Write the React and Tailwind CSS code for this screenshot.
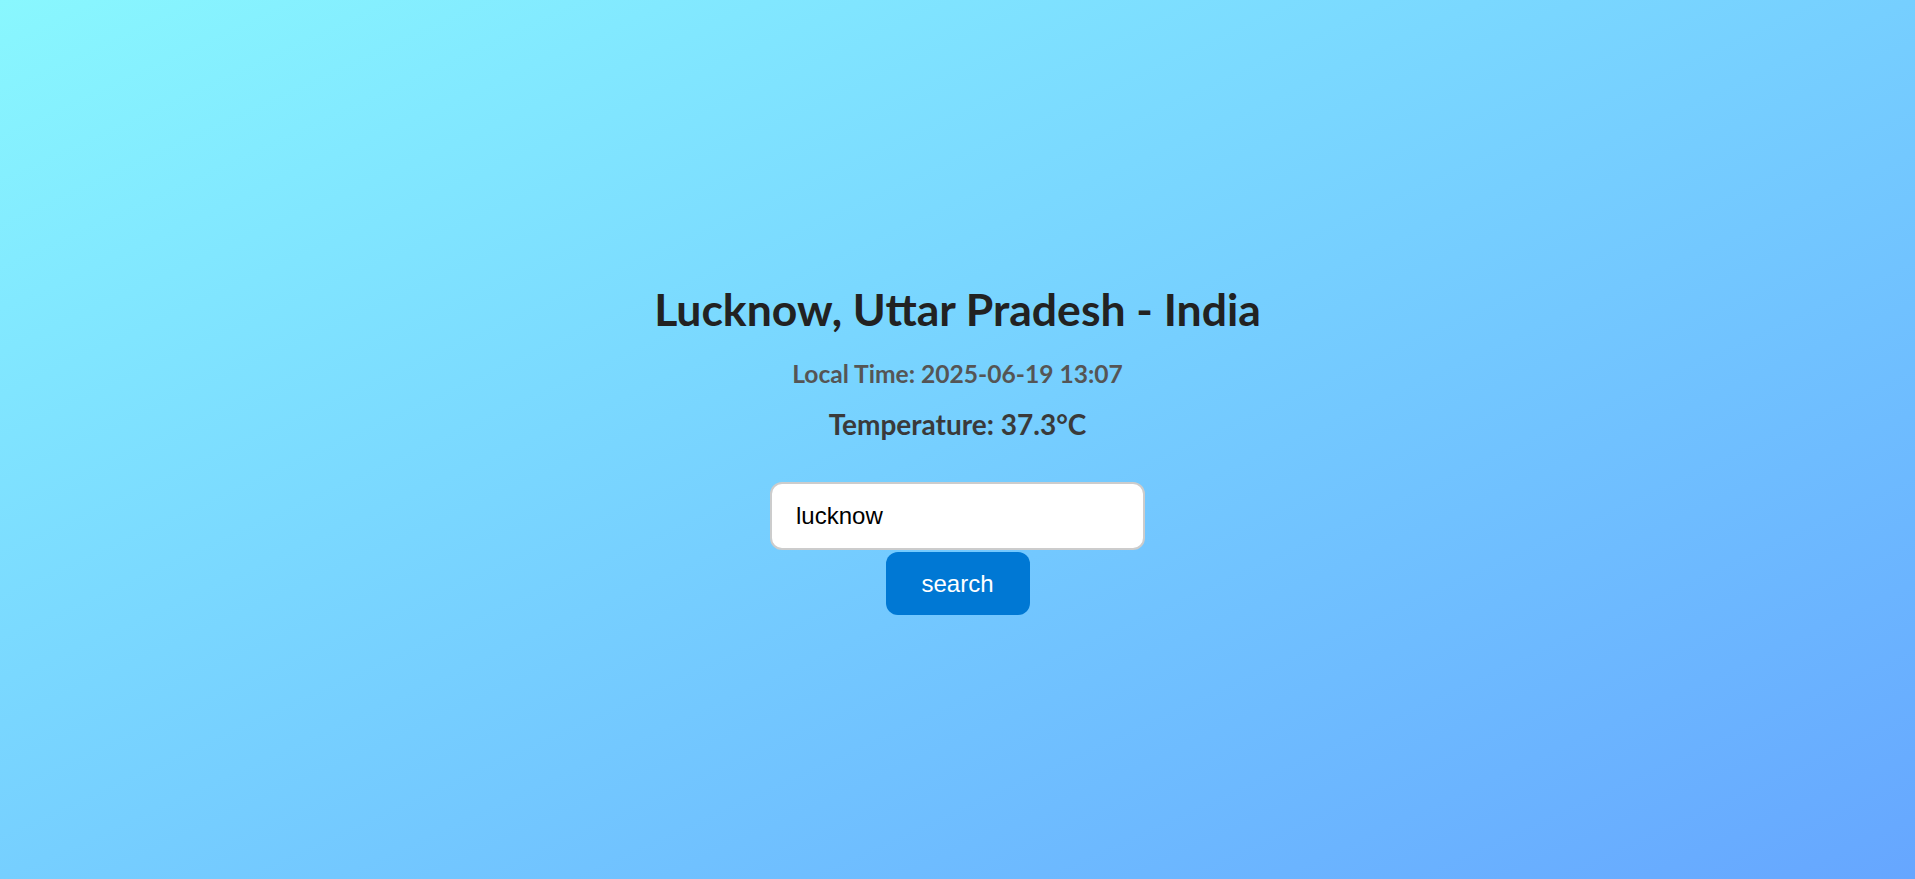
import { useState } from 'react';

const App = () => {
  const [city, setCity] = useState('lucknow');

  return (
    <div className="min-h-screen w-full bg-linear-to-br from-[#89f7fe] to-[#66a6ff] flex flex-col items-center pt-[282px] font-['Lato',sans-serif]">
      {/* Weather info */}
      <h1 className="text-[44.5px] leading-[53px] font-bold text-[#222]">Lucknow, Uttar Pradesh - India</h1>
      <p className="mt-[24px] text-[24.6px] leading-[29px] font-bold text-[#555]">Local Time: 2025-06-19 13:07</p>
      <p className="mt-[19px] text-[28px] leading-[34px] font-bold text-[#3a3a3a]">Temperature: 37.3°C</p>

      {/* Search */}
      <input
        type="text"
        value={city}
        onChange={(e) => setCity(e.target.value)}
        className="mt-[41px] w-[375px] h-[68px] rounded-xl border-2 border-[#ccc] bg-white px-6 text-[24px] text-black font-['Liberation_Sans',Arial,sans-serif] outline-none"
      />
      <button className="mt-[2px] w-[144px] h-[63px] rounded-xl bg-[#0078d4] text-[24px] text-white font-['Liberation_Sans',Arial,sans-serif]">
        search
      </button>
    </div>
  );
};

export default App;
